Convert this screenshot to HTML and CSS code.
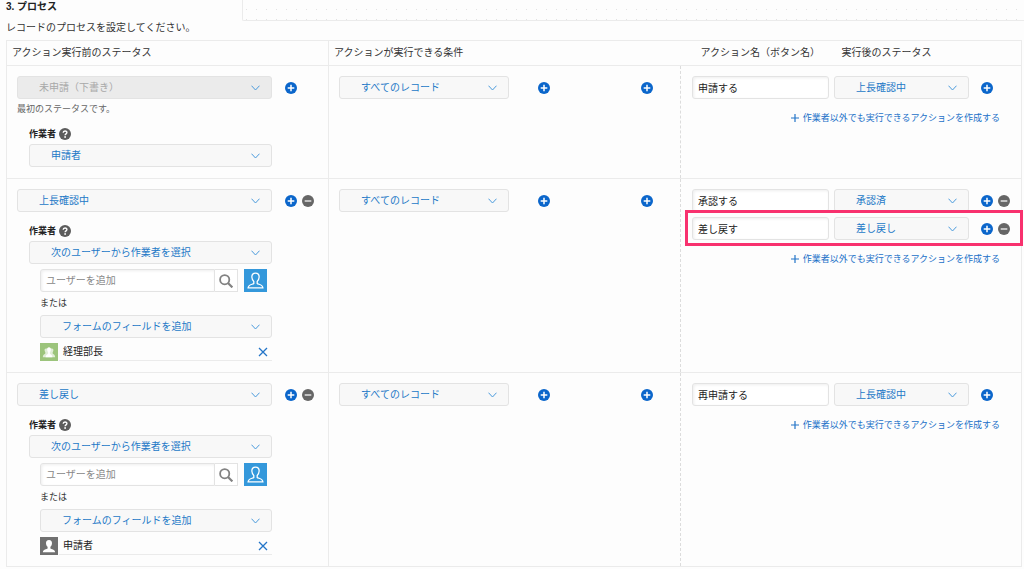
FILE: index.html
```html
<!DOCTYPE html>
<html lang="ja">
<head>
    <meta charset="UTF-8">
    <title>プロセス管理</title>
    <link rel="stylesheet" href="styles.css">
</head>
<body>
<!-- shared icons -->
<svg class="sprite" width="0" height="0">
    <symbol id="i-add" viewBox="0 0 12 12">
        <circle cx="6" cy="6" r="6" fill="#0b66cb"/>
        <path d="M6 2.7v6.6M2.7 6h6.6" stroke="#fff" stroke-width="1.5"/>
    </symbol>
    <symbol id="i-remove" viewBox="0 0 12 12">
        <circle cx="6" cy="6" r="6" fill="#666"/>
        <path d="M2.7 6h6.6" stroke="#d4d4d4" stroke-width="1.7"/>
    </symbol>
    <symbol id="i-help" viewBox="0 0 12 12">
        <circle cx="6" cy="6" r="6" fill="#5c5c5c"/>
        <path d="M4.2 4.7C4.2 2.4 7.9 2.4 7.9 4.6C7.9 5.9 6.1 5.8 6.1 7.3" fill="none" stroke="#fff" stroke-width="1.4"/>
        <circle cx="6.1" cy="9" r=".9" fill="#fff"/>
    </symbol>
    <symbol id="i-search" viewBox="0 0 14 14">
        <circle cx="5.7" cy="5.7" r="4.6" fill="none" stroke="#828282" stroke-width="1.8"/>
        <path d="M9 9l4.4 4.4" stroke="#828282" stroke-width="2.2"/>
    </symbol>
    <symbol id="i-person" viewBox="0 0 16 16">
        <path d="M8 1C5.6 1 4.4 2.7 4.6 5C4.7 6.8 5.4 8 6.4 8.9V10.8C5.4 11.8 1.2 11.6 1 15H15C14.8 11.6 10.6 11.8 9.6 10.8V8.9C10.6 8 11.3 6.8 11.4 5C11.6 2.7 10.4 1 8 1Z"/>
    </symbol>
    <symbol id="i-group" viewBox="0 0 16 14">
        <path d="M4.6 3C3.2 3 2.700 4.200 3 5.400C3.200 6.400 3.400 7 3.800 7.400V8.600C3.400 9.400 1 9.400 1 13H15C15 9.400 12.600 9.400 12.200 8.600V7.400C12.600 7 12.800 6.400 13 5.400C13.300 4.200 12.800 3 11.400 3Z" opacity=".7"/>
        <path d="M8 1.500C6.400 1.500 5.700 2.800 5.900 4.400C6 5.700 6.400 6.500 7 7.200V9C6.300 9.800 4.300 10 4.100 13H11.900C11.700 10 9.700 9.800 9 9V7.200C9.600 6.500 10 5.700 10.100 4.400C10.300 2.800 9.600 1.500 8 1.500Z"/>
    </symbol>
    <symbol id="i-close" viewBox="0 0 10 10">
        <path d="M1 1l8 8M9 1l-8 8" stroke="#2475c8" stroke-width="1.3"/>
    </symbol>
    <symbol id="i-plus" viewBox="0 0 8 8">
        <path d="M4 0v8M0 4h8" stroke="#2475c8" stroke-width="1.2"/>
    </symbol>
</svg>

<div class="top">
    <h2>3. プロセス</h2>
    <div class="panel"></div>
</div>
<p class="lead">レコードのプロセスを設定してください。</p>

<table class="process">
    <colgroup>
        <col class="col-status">
        <col>
        <col class="col-action">
        <col class="col-next">
    </colgroup>
    <thead>
    <tr>
        <th>アクション実行前のステータス</th>
        <th class="line">アクションが実行できる条件</th>
        <th class="th-action">アクション名（ボタン名）</th>
        <th class="th-next">実行後のステータス</th>
    </tr>
    </thead>
    <tbody>
    <tr>
        <td>
            <div class="status">
                <select class="grow" disabled aria-label="ステータス"><option>未申請（下書き）</option></select>
                <button class="icon" aria-label="追加"><svg><use href="#i-add"/></svg></button>
            </div>
            <p class="note">最初のステータスです。</p>
            <div class="worker">
                <div class="label"><label for="worker1">作業者</label><button class="icon" aria-label="ヘルプ"><svg><use href="#i-help"/></svg></button></div>
                <select id="worker1"><option>申請者</option></select>
            </div>
        </td>
        <td class="line">
            <div class="cond">
                <select aria-label="条件"><option>すべてのレコード</option></select>
                <button class="icon" aria-label="条件を追加"><svg><use href="#i-add"/></svg></button>
                <button class="icon last" aria-label="追加"><svg><use href="#i-add"/></svg></button>
            </div>
        </td>
        <td class="dash" colspan="2">
            <div class="action">
                <input type="text" value="申請する" aria-label="アクション名">
                <select aria-label="実行後のステータス"><option>上長確認中</option></select>
                <button class="icon" aria-label="追加"><svg><use href="#i-add"/></svg></button>
            </div>
            <a class="create" href="#"><svg><use href="#i-plus"/></svg>作業者以外でも実行できるアクションを作成する</a>
        </td>
    </tr>
    <tr>
        <td>
            <div class="status">
                <select class="grow" aria-label="ステータス"><option>上長確認中</option></select>
                <button class="icon" aria-label="追加"><svg><use href="#i-add"/></svg></button>
                <button class="icon" aria-label="削除"><svg><use href="#i-remove"/></svg></button>
            </div>
            <div class="worker">
                <div class="label"><label for="worker2">作業者</label><button class="icon" aria-label="ヘルプ"><svg><use href="#i-help"/></svg></button></div>
                <select id="worker2"><option>次のユーザーから作業者を選択</option></select>
                <div class="users">
                    <div class="search">
                        <input type="text" placeholder="ユーザーを追加" aria-label="ユーザーを追加">
                        <button class="find" aria-label="検索"><svg><use href="#i-search"/></svg></button>
                        <button class="pick" aria-label="ユーザーを選択"><svg><use href="#i-person"/></svg></button>
                    </div>
                    <label class="or" for="field2">または</label>
                    <select id="field2"><option>フォームのフィールドを追加</option></select>
                    <div class="user">
                        <span class="avatar group"><svg><use href="#i-group"/></svg></span>
                        <div class="name">経理部長<button class="close" aria-label="削除"><svg><use href="#i-close"/></svg></button></div>
                    </div>
                </div>
            </div>
        </td>
        <td class="line">
            <div class="cond">
                <select aria-label="条件"><option>すべてのレコード</option></select>
                <button class="icon" aria-label="条件を追加"><svg><use href="#i-add"/></svg></button>
                <button class="icon last" aria-label="追加"><svg><use href="#i-add"/></svg></button>
            </div>
        </td>
        <td class="dash" colspan="2">
            <div class="action">
                <input type="text" value="承認する" aria-label="アクション名">
                <select aria-label="実行後のステータス"><option>承認済</option></select>
                <button class="icon" aria-label="追加"><svg><use href="#i-add"/></svg></button>
                <button class="icon" aria-label="削除"><svg><use href="#i-remove"/></svg></button>
            </div>
            <div class="action marked">
                <input type="text" value="差し戻す" aria-label="アクション名">
                <select aria-label="実行後のステータス"><option>差し戻し</option></select>
                <button class="icon" aria-label="追加"><svg><use href="#i-add"/></svg></button>
                <button class="icon" aria-label="削除"><svg><use href="#i-remove"/></svg></button>
            </div>
            <a class="create" href="#"><svg><use href="#i-plus"/></svg>作業者以外でも実行できるアクションを作成する</a>
        </td>
    </tr>
    <tr>
        <td>
            <div class="status">
                <select class="grow" aria-label="ステータス"><option>差し戻し</option></select>
                <button class="icon" aria-label="追加"><svg><use href="#i-add"/></svg></button>
                <button class="icon" aria-label="削除"><svg><use href="#i-remove"/></svg></button>
            </div>
            <div class="worker">
                <div class="label"><label for="worker3">作業者</label><button class="icon" aria-label="ヘルプ"><svg><use href="#i-help"/></svg></button></div>
                <select id="worker3"><option>次のユーザーから作業者を選択</option></select>
                <div class="users">
                    <div class="search">
                        <input type="text" placeholder="ユーザーを追加" aria-label="ユーザーを追加">
                        <button class="find" aria-label="検索"><svg><use href="#i-search"/></svg></button>
                        <button class="pick" aria-label="ユーザーを選択"><svg><use href="#i-person"/></svg></button>
                    </div>
                    <label class="or" for="field3">または</label>
                    <select id="field3"><option>フォームのフィールドを追加</option></select>
                    <div class="user">
                        <span class="avatar"><svg><use href="#i-person"/></svg></span>
                        <div class="name">申請者<button class="close" aria-label="削除"><svg><use href="#i-close"/></svg></button></div>
                    </div>
                </div>
            </div>
        </td>
        <td class="line">
            <div class="cond">
                <select aria-label="条件"><option>すべてのレコード</option></select>
                <button class="icon" aria-label="条件を追加"><svg><use href="#i-add"/></svg></button>
                <button class="icon last" aria-label="追加"><svg><use href="#i-add"/></svg></button>
            </div>
        </td>
        <td class="dash" colspan="2">
            <div class="action">
                <input type="text" value="再申請する" aria-label="アクション名">
                <select aria-label="実行後のステータス"><option>上長確認中</option></select>
                <button class="icon" aria-label="追加"><svg><use href="#i-add"/></svg></button>
            </div>
            <a class="create" href="#"><svg><use href="#i-plus"/></svg>作業者以外でも実行できるアクションを作成する</a>
        </td>
    </tr>
    </tbody>
</table>
</body>
</html>
```
FILE: styles.css
```css
* {
    box-sizing: border-box;
}

body {
    margin: 0;
    padding: 0 2px 0 6px;
    background: #fdfdfd;
    color: #333;
    font-family: "Liberation Sans", "Noto Sans CJK JP", sans-serif;
    font-size: 10px;
    line-height: 14px;
}

h2, p {
    margin: 0;
}

button {
    padding: 0;
    border: 0;
    background: none;
    cursor: pointer;
}

svg {
    display: block;
    width: 12px;
    height: 12px;
}

.sprite {
    position: absolute;
    width: 0;
    height: 0;
}

/* title and dotted panel */
.top {
    display: flex;
    height: 21px;
}

h2 {
    width: 236px;
    font-size: 10px;
    line-height: 14px;
    color: #222;
}

.panel {
    flex: 1;
    margin-right: -2px;
    border: solid #ebebeb;
    border-width: 0 0 1px 1px;
    border-bottom-left-radius: 2px;
    background: conic-gradient(from 90deg at 9px 9px, #e2e2e2 90deg, transparent 0) -6px 0 / 10px 10px;
}

.lead {
    margin-bottom: 5px;
}

/* table */
.process {
    width: 100%;
    table-layout: fixed;
    border-collapse: collapse;
    border: 1px solid #ebebeb;
}

.col-status {
    width: 322px;
}

.col-action {
    width: 153px;
}

.col-next {
    width: 188px;
}

th {
    height: 25px;
    padding: 0 5px;
    border-bottom: 1px solid #ebebeb;
    font-weight: normal;
    text-align: left;
    white-space: nowrap;
}

.th-action {
    padding-left: 20px;
}

.th-next {
    padding-left: 8px;
}

td {
    padding: 10px 0 11px 10px;
    border-bottom: 1px solid #ebebeb;
    vertical-align: top;
}

.line {
    border-left: 1px solid #ebebeb;
}

.dash {
    padding-left: 11px;
    border-left: 1px dashed #dcdcdc;
}

/* controls */
select, input {
    display: block;
    width: 100%;
    height: 23px;
    margin: 0;
    border: 1px solid #e3e3e3;
    border-radius: 3px;
    font: inherit;
}

select {
    appearance: none;
    padding: 0 28px 0 21px;
    background: #f8f8f8 url("data:image/svg+xml,%3Csvg xmlns='http://www.w3.org/2000/svg' width='9' height='6'%3E%3Cpath d='M.5 .7L4.5 5L8.5 .7' fill='none' stroke='%234b9bdc'/%3E%3C/svg%3E") no-repeat right 11px center;
    color: #2378c7;
}

select:disabled {
    background-color: #ebebeb;
    color: #a8a8a8;
    opacity: 1;
}

input {
    padding: 0 5px;
    background: #fff;
    box-shadow: inset 1px 1px 3px #eee;
    color: #222;
}

input::placeholder {
    color: #888;
    opacity: 1;
}

.icon {
    flex: none;
    width: 12px;
    height: 12px;
}

.status, .cond, .action, .search, .label, .user {
    display: flex;
    align-items: center;
}

/* status column */
.status .grow {
    width: 255px;
    margin-right: 8px;
}

.status .icon {
    margin-left: 5px;
}

.note {
    margin-top: 4px;
    font-size: 9px;
    line-height: 12px;
    color: #666;
}

.worker {
    width: 243px;
    margin: 12px 0 0 12px;
}

.label {
    gap: 3px;
    margin-bottom: 3px;
    font-size: 9px;
    font-weight: bold;
    color: #222;
}

.users {
    margin: 5px 0 0 11px;
}

.search input {
    flex: 1;
    min-width: 0;
    border-radius: 3px 0 0 3px;
}

.find, .pick {
    display: flex;
    flex: none;
    align-items: center;
    justify-content: center;
    width: 23px;
    height: 23px;
}

.find {
    border: solid #e3e3e3;
    border-width: 1px 1px 1px 0;
    background: #fff;
}

.find svg {
    width: 14px;
    height: 14px;
}

.pick {
    margin: 0 5px 0 6px;
    background: #3498db;
}

.pick svg {
    width: 17px;
    height: 17px;
    fill: none;
    stroke: #fff;
    stroke-width: 1.2;
}

.or {
    display: block;
    margin: 4px 0 5px;
    font-size: 9px;
}

.user {
    gap: 1px;
    margin-top: 5px;
}

.avatar {
    padding: 2px;
    width: 18px;
    height: 18px;
    background: #707070;
    fill: #fff;
}

.avatar svg {
    width: 14px;
    height: 14px;
}

.group {
    background: #9cc47c;
}

.name {
    display: flex;
    flex: 1;
    align-items: center;
    justify-content: space-between;
    height: 18px;
    padding: 0 4px;
    border-bottom: 1px solid #ebebeb;
    color: #222;
}

.close svg {
    width: 10px;
    height: 10px;
}

/* condition column */
.cond select {
    width: 170px;
    margin-right: 29px;
}

.cond .last {
    margin: 0 27px 0 auto;
}

/* action column */
.action {
    position: relative;
    gap: 5px;
}

.action + .action {
    margin-top: 5px;
}

.action input {
    width: 137px;
}

.action select {
    width: 135px;
    margin-right: 7px;
}

.marked::after {
    content: "";
    position: absolute;
    inset: -7px -2px -6px -7px;
    border: 3px solid #f8316e;
    pointer-events: none;
}

.create {
    display: flex;
    align-items: center;
    justify-content: flex-end;
    gap: 4px;
    margin: 13px 21px 0 0;
    font-size: 9px;
    line-height: 12px;
    color: #1a70c8;
    text-decoration: none;
}

.create svg {
    width: 8px;
    height: 8px;
}
```
